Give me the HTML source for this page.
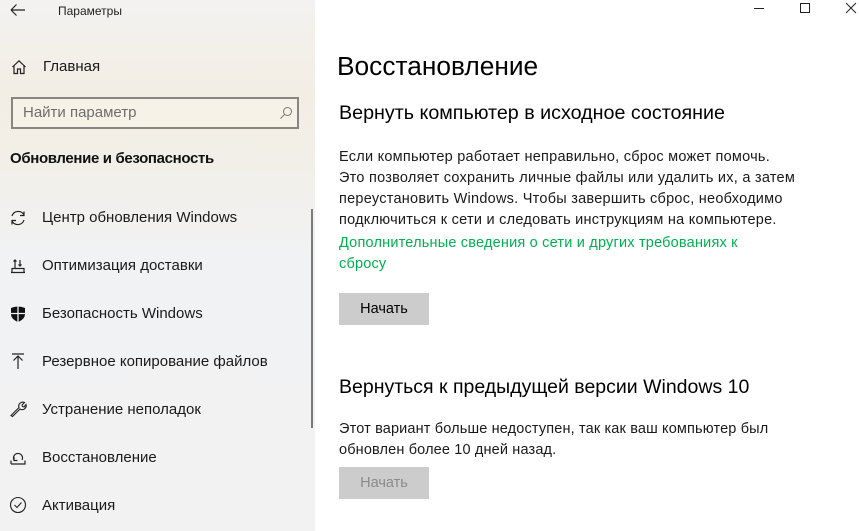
<!DOCTYPE html>
<html><head><meta charset="utf-8"><style>
*{margin:0;padding:0;box-sizing:border-box}
body{width:859px;height:531px;overflow:hidden;font-family:"Liberation Sans","DejaVu Sans",sans-serif;background:#fff;position:relative;color:#000}
.side{position:absolute;left:0;top:0;width:315px;height:531px;background:linear-gradient(180deg,#f3f2f1 0,#f3eee4 90px,#f2efe8 160px,#f1f2f4 260px,#f2f2f2 531px)}
.t{position:absolute;white-space:nowrap}
.item{position:absolute;left:42px;font-size:15px;color:#1a1a1a}
.ic{position:absolute;left:9px}
p.b{position:absolute;left:339px;font-size:14.5px;line-height:21px;color:#1a1a1a;white-space:nowrap;letter-spacing:0.25px}
.btn{position:absolute;left:339px;width:90px;height:32px;background:#cccccc;font-size:14.5px;text-align:center;line-height:32px}
</style></head><body>
<div class="side">
<svg class="t" style="left:10px;top:3px" width="18" height="14" viewBox="0 0 18 14"><path d="M1 7H15M1 7L6.5 1.5M1 7L6.5 12.5" stroke="#222" stroke-width="1.2" fill="none"/></svg>
<div class="t" style="left:58px;top:4px;font-size:12px;color:#222">Параметры</div>
<svg class="t" style="left:11px;top:59px" width="16" height="16" viewBox="0 0 16 16"><path d="M1.5 8L8 1.8L14.5 8M3 6.5V14.5H6.5V10H9.5V14.5H13V6.5" stroke="#222" stroke-width="1.2" fill="none"/></svg>
<div class="t" style="left:43px;top:58px;font-size:15px;color:#1a1a1a">Главная</div>
<div class="t" style="left:11px;top:97px;width:288px;height:32px;border:2px solid #8a8581;background:#f7f2e8"></div>
<div class="t" style="left:23px;top:104px;font-size:15px;color:#6d6d6d">Найти параметр</div>
<svg class="t" style="left:279px;top:106px" width="14" height="14" viewBox="0 0 14 14"><circle cx="8.5" cy="5.5" r="4" stroke="#777" fill="none"/><path d="M5.5 8.5L1.5 12.5" stroke="#777"/></svg>
<div class="t" style="left:10px;top:150px;font-size:15px;font-weight:bold;color:#111;letter-spacing:-0.35px">Обновление и безопасность</div>
<svg class="ic t" style="top:209px" width="18" height="18" viewBox="0 0 18 18"><path d="M3 7A6.5 6.5 0 0 1 15 6M15 11A6.5 6.5 0 0 1 3 12M15 2.5V6.5H11M3 15.5V11.5H7" stroke="#222" stroke-width="1.2" fill="none"/></svg>
<div class="t item" style="top:209px">Центр обновления Windows</div>
<svg class="ic t" style="top:257px" width="18" height="18" viewBox="0 0 18 18"><path d="M2 15.5H16M3 15.5V11.5H15V15.5M6 11V3M4.5 4.5L6 3L7.5 4.5M11 3V9M9.5 7.5L11 9L12.5 7.5" stroke="#222" stroke-width="1.2" fill="none"/></svg>
<div class="t item" style="top:257px">Оптимизация доставки</div>
<svg class="ic t" style="top:305px" width="18" height="18" viewBox="0 0 18 18"><path d="M2 3Q9 0 16 3V9Q16 14 9 17Q2 14 2 9Z" fill="#111"/><path d="M9 1V17M2 8.5H16" stroke="#f2f2f2" stroke-width="1.3"/></svg>
<div class="t item" style="top:305px">Безопасность Windows</div>
<svg class="ic t" style="top:352px" width="18" height="18" viewBox="0 0 18 18"><path d="M3 2H15M9 4V17M4.5 8.5L9 4L13.5 8.5" stroke="#222" stroke-width="1.2" fill="none"/></svg>
<div class="t item" style="top:353px">Резервное копирование файлов</div>
<svg class="ic t" style="top:400px" width="18" height="18" viewBox="0 0 18 18"><path d="M2 15.5L10 7.5A4 4 0 0 1 15.5 2.5L13 5L13.5 6.5L15 7L17 4.5A4 4 0 0 1 11 9L3.5 16.5Z" stroke="#222" stroke-width="1.1" fill="none"/></svg>
<div class="t item" style="top:401px">Устранение неполадок</div>
<svg class="ic t" style="top:448px" width="18" height="18" viewBox="0 0 18 18"><path d="M2 16H16V12.5M2 16V12.5M5 12A4.5 4.5 0 1 1 13 12M5 9L5 12.5H8.5" stroke="#222" stroke-width="1.2" fill="none"/></svg>
<div class="t item" style="top:449px">Восстановление</div>
<svg class="ic t" style="top:496px" width="18" height="18" viewBox="0 0 18 18"><circle cx="9" cy="9" r="7.5" stroke="#222" stroke-width="1.1" fill="none"/><path d="M5.5 9L8 11.5L12.5 6.5" stroke="#222" stroke-width="1.1" fill="none"/></svg>
<div class="t item" style="top:497px">Активация</div>
<div class="t" style="left:311px;top:209px;width:2px;height:219px;background:#7a7a7a"></div>
</div>
<div class="t" style="left:754px;top:8px;width:10px;height:1px;background:#222"></div>
<div class="t" style="left:800px;top:3px;width:10px;height:10px;border:1px solid #222"></div>
<svg class="t" style="left:845px;top:2px" width="12" height="12" viewBox="0 0 12 12"><path d="M1 1L11 11M11 1L1 11" stroke="#222"/></svg>
<div class="t" style="left:337px;top:51px;font-size:26.3px;color:#000">Восстановление</div>
<div class="t" style="left:339px;top:102px;font-size:19.7px">Вернуть компьютер в исходное состояние</div>
<p class="b" style="top:147px">Если компьютер работает неправильно, сброс может помочь.<br>Это позволяет сохранить личные файлы или удалить их, а затем<br>переустановить Windows. Чтобы завершить сброс, необходимо<br>подключиться к сети и следовать инструкциям на компьютере.</p>
<p class="b" style="top:233px;color:#00b050;letter-spacing:0.2px">Дополнительные сведения о сети и других требованиях к<br>сбросу</p>
<div class="btn" style="top:293px">Начать</div>
<div class="t" style="left:339px;top:376px;font-size:19.5px">Вернуться к предыдущей версии Windows 10</div>
<p class="b" style="top:419px;letter-spacing:0.15px">Этот вариант больше недоступен, так как ваш компьютер был<br>обновлен более 10 дней назад.</p>
<div class="btn" style="top:467px;color:#8a8a8a">Начать</div>
</body></html>
